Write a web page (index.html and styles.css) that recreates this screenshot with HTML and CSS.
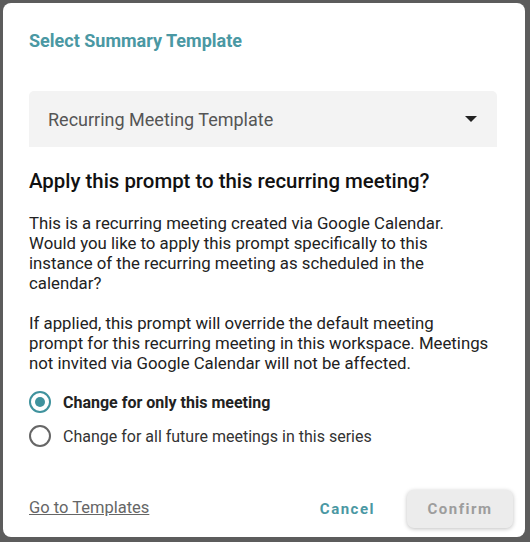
FILE: index.html
```html
<!DOCTYPE html>
<html lang="en">

<head>
    <meta charset="UTF-8">
    <meta name="viewport" content="width=device-width, initial-scale=1.0">
    <title>Select Summary Template</title>
    <link rel="stylesheet" href="styles.css">
</head>

<body>
    <div class="dialog">
        <h2 class="titulo">Select Summary Template</h2>

        <div class="select">
            <span>Recurring Meeting Template</span>
            <svg class="seta" width="12" height="6" viewBox="0 0 12 6"><path d="M0 0h12L6 6z" fill="#222"/></svg>
        </div>

        <h3 class="pergunta">Apply this prompt to this recurring meeting?</h3>

        <p class="texto">This is a recurring meeting created via Google Calendar. Would you like to apply this prompt specifically to this instance of the recurring meeting as scheduled in the calendar?</p>
        <p class="texto">If applied, this prompt will override the default meeting prompt for this recurring meeting in this workspace. Meetings not invited via Google Calendar will not be affected.</p>

        <div class="opcoes">
            <label class="opcao ativa">
                <span class="radio"></span>
                Change for only this meeting
            </label>
            <label class="opcao">
                <span class="radio"></span>
                Change for all future meetings in this series
            </label>
        </div>

        <div class="rodape">
            <a href="#" class="link">Go to Templates</a>
            <div class="botoes">
                <button class="cancelar">Cancel</button>
                <button class="confirmar">Confirm</button>
            </div>
        </div>
    </div>
</body>

</html>
```

FILE: styles.css
```css
*{
    margin: 0px;
    padding: 0px;
    border: 0px;
    box-sizing: border-box;
}
body {
    background-color: #5c5c5c;
    padding: 3px 5px 5px 3px;
    font-family: Roboto, 'Liberation Sans', sans-serif;
    color: #222;
}

.dialog {
    width: 522px;
    height: 534px;
    background: #fff;
    border-radius: 8px;
    display: flex;
    flex-direction: column;
    padding: 27px 28px 0 26px;
}

.titulo {
    font-size: 18px;
    line-height: 22px;
    font-weight: 700;
    color: #4a98a3;
}

.select {
    margin-top: 39px;
    height: 56px;
    background: #f3f3f3;
    border-radius: 5px 5px 0 0;
    display: flex;
    align-items: center;
    justify-content: space-between;
    padding: 0 20px 0 19px;
    font-size: 18px;
    color: #555;
}

.pergunta {
    margin-top: 22px;
    font-size: 20.4px;
    line-height: 24px;
    font-weight: 500;
    color: #111;
}

.texto {
    margin-top: 20px;
    max-width: 462px;
    font-size: 16.8px;
    line-height: 20px;
    color: #222;
}

.opcoes {
    margin-top: 12px;
}

.opcao {
    display: flex;
    align-items: center;
    height: 34px;
    gap: 12px;
    font-size: 16px;
    color: #333;
}

.opcao.ativa {
    font-weight: 700;
    color: #222;
}

.radio {
    width: 22px;
    height: 22px;
    border-radius: 50%;
    border: 2px solid #666;
    display: flex;
    align-items: center;
    justify-content: center;
}

.ativa .radio {
    border-color: #3f929d;
}

.ativa .radio::after {
    content: '';
    width: 10px;
    height: 10px;
    border-radius: 50%;
    background: #3f929d;
}

.rodape {
    margin-top: auto;
    margin-right: -16px;
    padding-bottom: 9px;
    display: flex;
    align-items: center;
    justify-content: space-between;
}

.link {
    font-size: 16.5px;
    color: #666;
    margin-top: -4px;
}

.botoes {
    display: flex;
    align-items: center;
    gap: 28px;
}

button {
    font-family: Roboto, 'Liberation Sans', sans-serif;
    font-size: 15px;
    font-weight: 700;
    letter-spacing: 1.5px;
    background: none;
}

.cancelar {
    color: #4a98a3;
    padding: 8px 4px;
}

.confirmar {
    width: 106px;
    height: 38px;
    border-radius: 7px;
    background: #ececec;
    color: #9d9d9d;
    box-shadow: 0 1px 4px rgba(0, 0, 0, 0.25);
}
```
